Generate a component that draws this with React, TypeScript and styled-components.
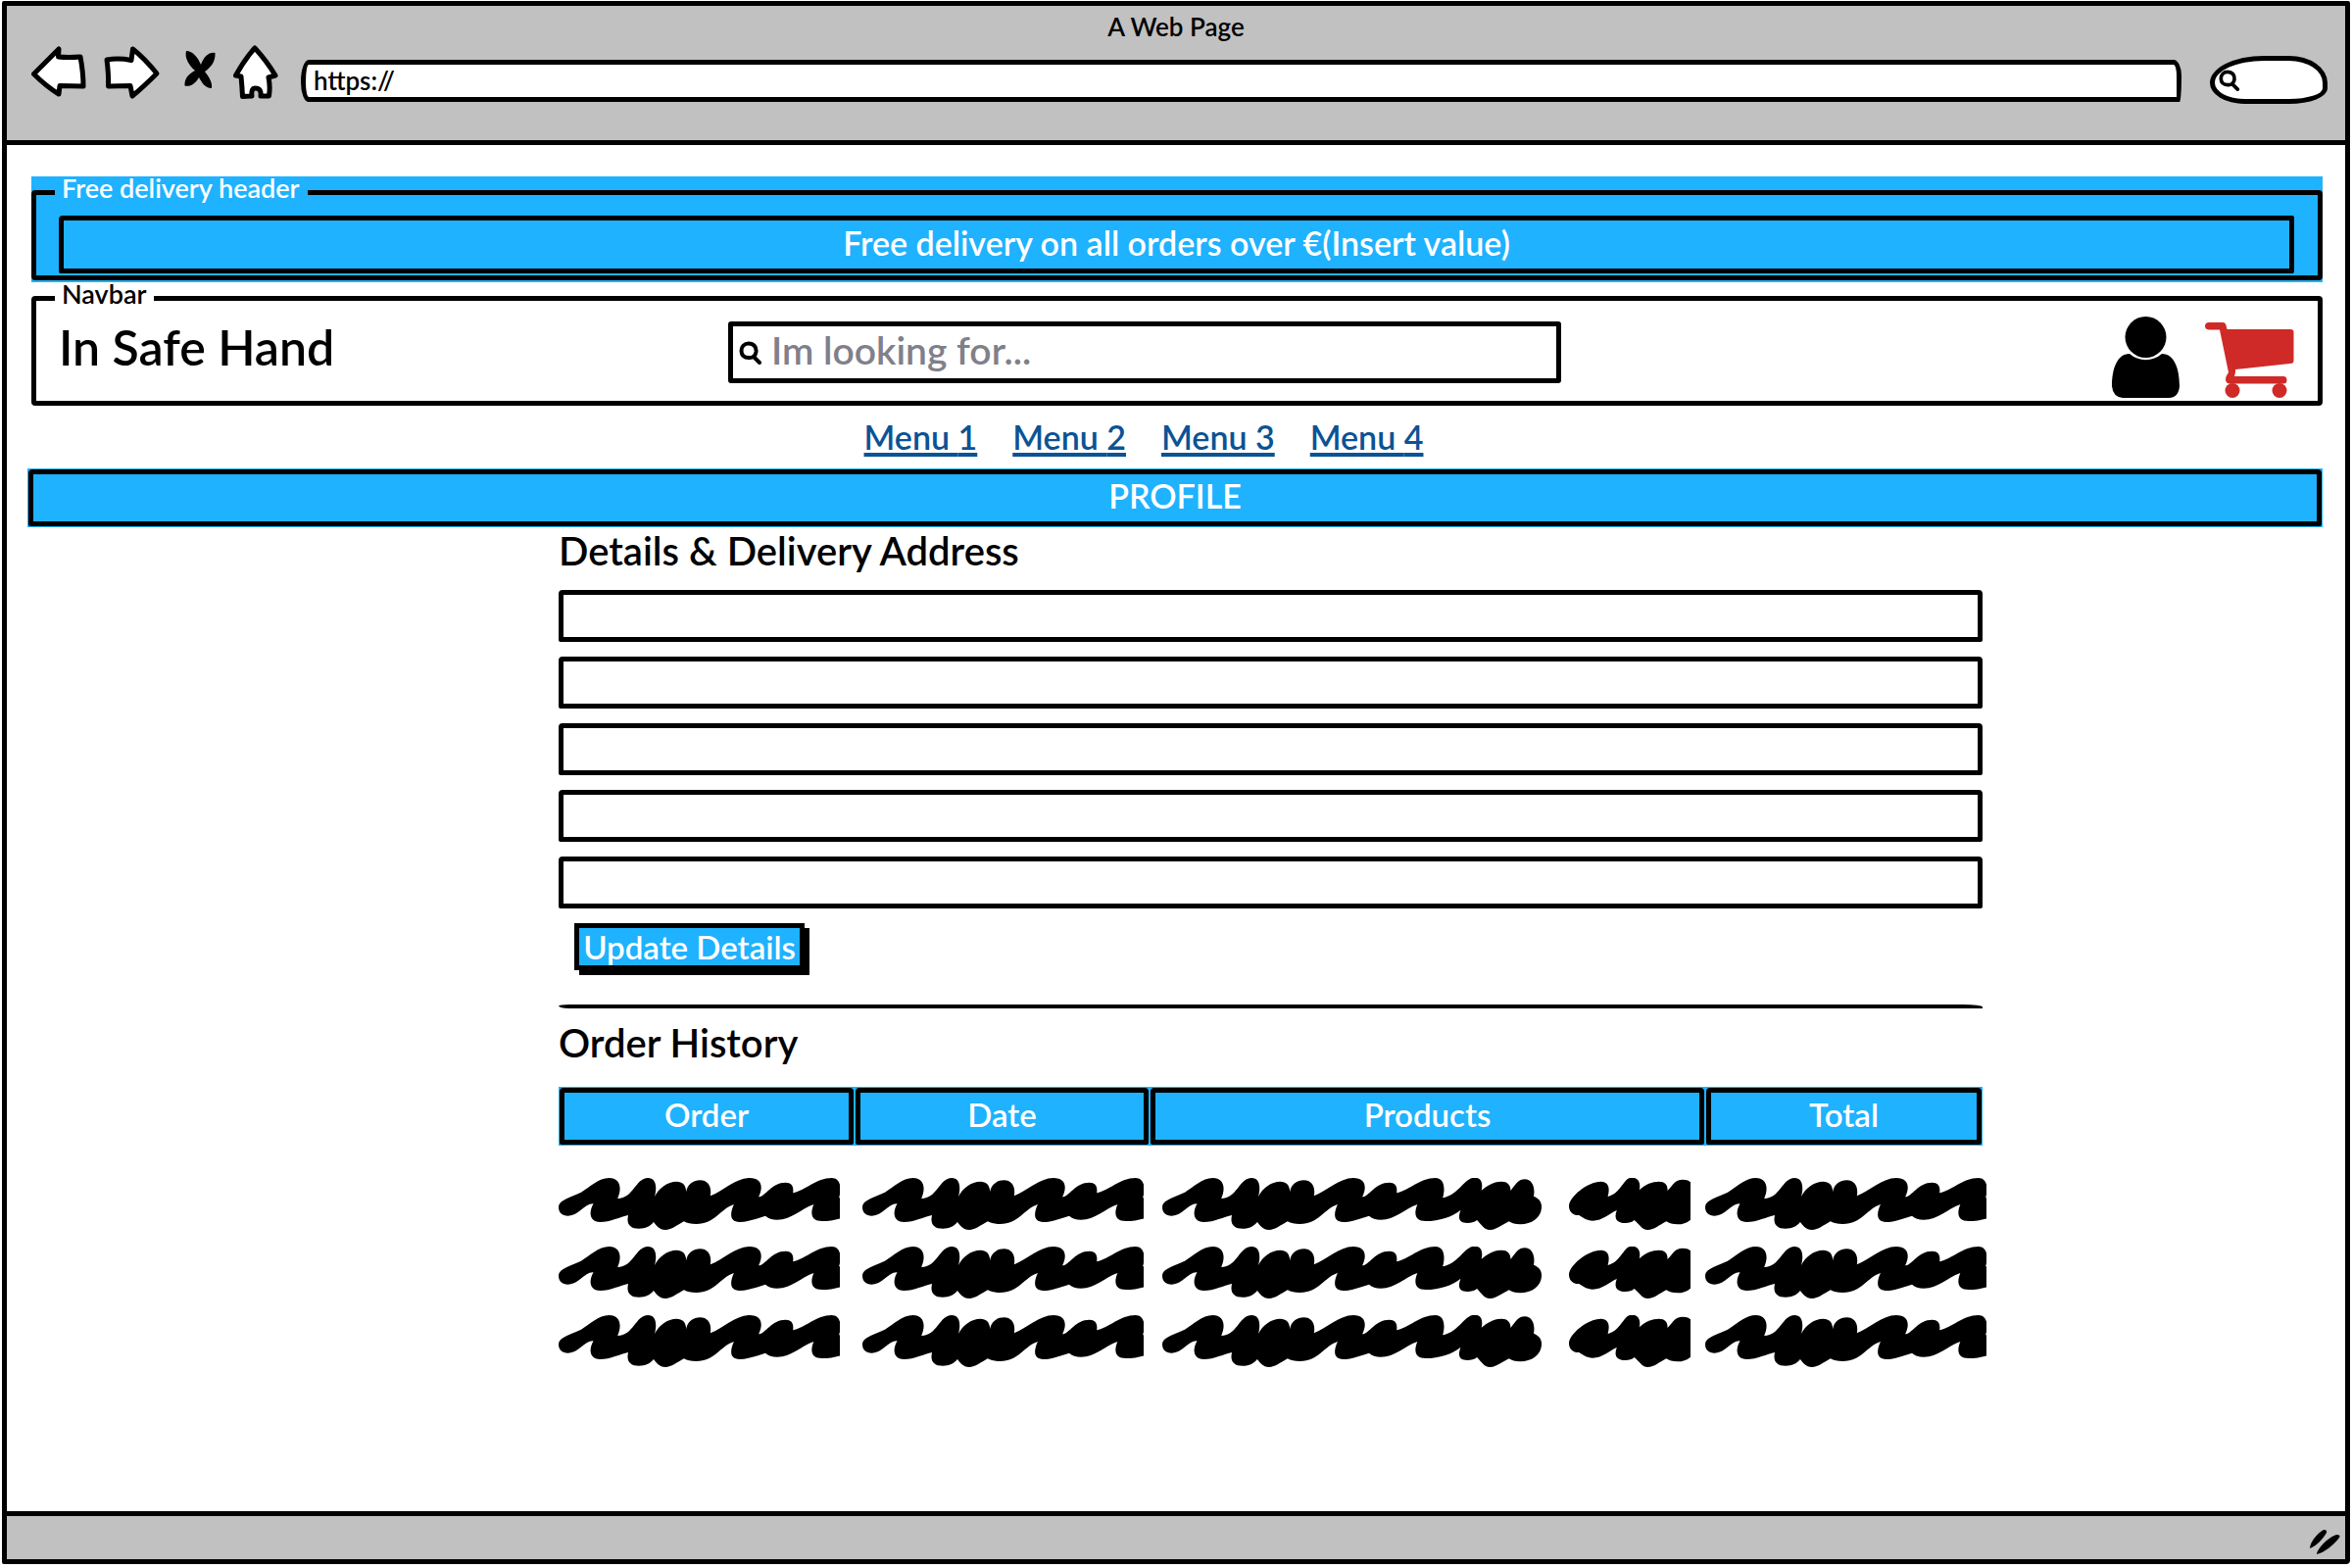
import React from "react";
import styled, { createGlobalStyle } from "styled-components";

const INK = "#000000";
const BLUE = "#1eb2ff";
const GREY = "#c1c1c1";

const GlobalStyle = createGlobalStyle`
  *, *::before, *::after { box-sizing: border-box; }
  body { margin: 0; background: #fff; }
  body, button, input {
    font-family: Lato, "Open Sans", sans-serif;
    font-weight: 600;
    color: ${INK};
  }
`;

const Page = styled.div`
  min-height: 100vh;
  display: flex;
  padding: 1px 2px 4px;
`;

const BrowserWindow = styled.div`
  flex: 1;
  min-width: 0;
  display: flex;
  flex-direction: column;
  border: 5px solid ${INK};
  border-radius: 2px 2px 4px 2px;
  background: #fff;
`;

const BrowserHeader = styled.header`
  background: ${GREY};
  border-bottom: 5px solid ${INK};
  padding-bottom: 37px;
`;

const WindowTitle = styled.div`
  padding-top: 2px;
  font-size: 26px;
  line-height: 38px;
  text-align: center;
`;

const Toolbar = styled.div`
  display: flex;
  align-items: flex-start;
  gap: 18px;
  height: 60px;
  padding: 0 18px 0 25px;
`;

const IconButton = styled.button`
  display: block;
  flex: none;
  padding: 0;
  border: 0;
  background: none;
  line-height: 0;
`;

const Address = styled.input`
  flex: 1;
  min-width: 0;
  height: 43px;
  margin: 15px 11px 0 5px;
  padding: 0 8px 2px;
  border: 5px solid ${INK};
  border-radius: 8px 8px 2px 8px / 22px 16px 26px 20px;
  background: #fff;
  font-size: 26px;
`;

const PillSearch = styled.div`
  display: flex;
  align-items: center;
  flex: none;
  width: 120px;
  height: 49px;
  margin-top: 11px;
  padding-left: 4px;
  border: 5px solid ${INK};
  border-radius: 56px 40px 40px 36px / 28px 28px 16px 22px;
  background: #fff;
`;

const BareInput = styled.input`
  flex: 1;
  min-width: 0;
  padding: 0 0 6px;
  border: 0;
  outline: 0;
  background: none;
  font-size: 39px;
  line-height: 46px;
  &::placeholder { color: #80808a; opacity: 1; }
`;

const Viewport = styled.div`
  flex: 1;
  padding: 32px 23px 32px 21px;
`;

const Group = styled.div<{ $fill?: string }>`
  margin-left: 4px;
  padding-bottom: ${(p) => (p.$fill ? 2 : 0)}px;
  background: ${(p) => p.$fill ?? "transparent"};
  color: ${(p) => (p.$fill ? "#fff" : INK)};
`;

const Fieldset = styled.fieldset<{ $pad: string }>`
  min-width: 0;
  margin: 0;
  padding: ${(p) => p.$pad};
  border: 5px solid ${INK};
  border-radius: 4px;
`;

const Legend = styled.legend`
  margin-left: -4px;
  padding: 0 8px 9px 7px;
  font-size: 27px;
  line-height: 23px;
`;

const Banner = styled.div`
  border: 5px solid ${INK};
  border-radius: 4px 2px 2px 2px;
  padding-bottom: 3px;
  font-size: 34px;
  line-height: 46px;
  text-align: center;
`;

const NavRow = styled.div`
  display: grid;
  grid-template-columns: 683fr 850fr 748fr;
  align-items: start;
`;

const Brand = styled.div`
  font-size: 50px;
  line-height: 62px;
`;

const SearchBox = styled.div`
  display: flex;
  align-items: center;
  gap: 9px;
  height: 63px;
  margin-top: 5px;
  padding: 0 6px;
  border: 5px solid ${INK};
  border-radius: 3px;
`;

const Actions = styled.div`
  display: flex;
  justify-content: flex-end;
  align-items: flex-end;
  gap: 26px;
`;

const Menu = styled.nav`
  display: flex;
  justify-content: center;
  gap: 36px;
  padding-right: 64px;
  line-height: 64px;
`;

const MenuLink = styled.a`
  color: #0b5394;
  font-size: 34px;
  text-decoration: underline;
  text-decoration-thickness: 4px;
  text-underline-offset: 3px;
  text-decoration-skip-ink: none;
`;

const ProfileBar = styled.h1`
  margin: 0;
  padding: 1px;
  background: ${BLUE};
  color: #fff;
  font-size: 34px;
  font-weight: 600;
  line-height: 44px;
  text-align: center;
`;

const Outlined = styled.span`
  display: block;
  padding-bottom: 4px;
  border: 5px solid ${INK};
  border-radius: 4px 4px 2px 2px;
`;

const Columns = styled.div`
  display: grid;
  grid-template-columns: 542fr 1453fr 347fr;
`;

const Main = styled.main`
  grid-column: 2;
  min-width: 0;
`;

const Heading = styled.h2`
  margin: 0;
  font-size: 40px;
  font-weight: 600;
  line-height: 48px;
`;

const Form = styled.form`
  display: flex;
  flex-direction: column;
  gap: 15px;
  margin-top: 16px;
`;

const Field = styled.input`
  width: 100%;
  height: 53px;
  padding: 0 12px;
  border: 5px solid ${INK};
  border-radius: 4px 4px 2px 2px;
  background: #fff;
  font-size: 33px;
`;

const UpdateButton = styled.button`
  align-self: flex-start;
  width: 235px;
  height: 48px;
  margin-left: 16px;
  padding: 0;
  border: 5px solid ${INK};
  background: ${BLUE};
  box-shadow: 5px 5px 0 ${INK};
  color: #fff;
  font-size: 33px;
  line-height: 38px;
  white-space: nowrap;
`;

const Divider = styled.hr`
  height: 4px;
  margin: 35px 0 11px;
  border: 0;
  border-radius: 16px 30px 0 16px / 2px 4px 0 4px;
  background: ${INK};
`;

const Table = styled.table`
  width: 100%;
  margin-top: 21px;
  table-layout: fixed;
  border-collapse: collapse;
`;

const Th = styled.th`
  padding: 1px;
  background: ${BLUE};
  color: #fff;
  font-size: 33px;
  font-weight: 600;
  line-height: 44px;
`;

const Td = styled.td<{ $indent: number }>`
  padding: 0 0 17px ${(p) => p.$indent}px;
  line-height: 0;
  white-space: nowrap;
  tr:first-child > & { padding-top: 33px; }
`;

const Strokes = styled.div`
  display: flex;
  gap: 28px;
`;

const StatusBar = styled.footer`
  display: flex;
  justify-content: flex-end;
  align-items: flex-end;
  height: 49px;
  padding: 0 4px 4px;
  border-top: 5px solid ${INK};
  background: ${GREY};
`;

const LONG_STROKE =
  "M47 158C47 141 58 134 87 113C102 98 118 69 137 69C155 69 161 96 152 132C180 132 184 69 206 69C219 69 223 92 218 126C225 100 241 80 257 80C267 80 274 90 274 112C276 88 287 76 299 76C313 76 320 96 317 124C340 109 362 69 387 69C408 69 412 95 403 127C415 126 426 83 451 83C462 83 466 96 464 115C485 108 506 69 533 69C549 69 551 101 546 130C574 122 585 68 603 68C615 68 618 86 615 107C628 88 639 80 651 80C661 80 667 90 667 108C677 86 681 73 692 73C705 73 711 97 708 125C717 131 722 142 722 157C722 190 705 211 684 211C675 211 669 208 664 202C650 214 641 228 630 228C619 228 615 211 607 198C602 205 597 207 590 207C574 207 573 190 578 167C563 188 540 201 516 201C497 201 494 180 501 150C477 165 461 197 436 197C427 197 420 193 415 185C401 192 384 204 369 204C352 204 351 180 359 150C336 162 325 210 292 210C282 210 276 208 270 202C258 213 248 228 237 228C226 228 221 214 216 204C209 218 202 224 190 224C174 224 167 209 171 183C157 188 139 204 121 204C102 204 100 175 109 148C93 146 83 185 64 185C53 185 47 174 47 158Z";

const SHORT_STROKE =
  "M770 155C770 128 802 80 827 80C841 80 843 101 839 126C864 115 866 68 882 68C894 68 898 86 895 106C906 88 918 80 930 80C941 80 946 91 945 108C955 91 958 74 972 74C980 74 984 78 986 82V197C979 207 972 211 963 211C954 211 948 207 943 202C930 213 922 228 910 228C899 228 896 211 886 198C882 205 877 207 870 207C853 207 850 190 855 168C842 177 830 200 812 200C802 200 794 190 788 183C775 184 770 169 770 155Z";

function LongScribble({ width }: { width: number }) {
  return (
    <svg width={width} height="53" viewBox={`47 69 ${width * 1.744} 159`} preserveAspectRatio="none" aria-hidden="true">
      <path d={LONG_STROKE} fill={INK} />
    </svg>
  );
}

function ShortScribble() {
  return (
    <svg width="124" height="53" viewBox="770 69 216 159" preserveAspectRatio="none" aria-hidden="true">
      <path d={SHORT_STROKE} fill={INK} />
    </svg>
  );
}

function Outline({ width, d }: { width: number; d: string }) {
  return (
    <svg width={width} height="56" viewBox={`0 0 ${width} 56`} aria-hidden="true">
      <path d={d} fill="#fff" stroke={INK} strokeWidth="5" strokeLinejoin="round" />
    </svg>
  );
}

function Magnifier({ size }: { size: number }) {
  return (
    <svg width={size} height={size} viewBox="0 0 24 24" fill="none" stroke={INK} strokeWidth="4" strokeLinecap="round" aria-hidden="true">
      <path d="M10 2.500C15 2.500 18 6 17.500 11C17 15 14 17.500 10 17C5 17 2.500 14 2.500 10C2.500 5.500 5.500 2.500 10 2.500Z" />
      <path d="M15 16L21 22" />
    </svg>
  );
}

const FIELDS = ["Full name", "Email", "Street address", "City", "Postcode"];
const HEADINGS = ["Order", "Date", "Products", "Total"];

export default function App() {
  return (
    <Page>
      <GlobalStyle />
      <BrowserWindow>
        <BrowserHeader>
          <WindowTitle>A Web Page</WindowTitle>
          <Toolbar>
            <IconButton aria-label="Back">
              <Outline width={56} d="M2.500 29.500L28 4L27.500 12Q38 13 50 12Q53 28 53 42L29 41.500L28 50Q15 42 2.500 29.500Z" />
            </IconButton>
            <IconButton aria-label="Forward">
              <Outline width={58} d="M3 15Q15 13 28 15.500L29.500 4Q42 14 54 29Q40 43 29 52L27 41.500L4.500 42Q5 30 3 15Z" />
            </IconButton>
            <IconButton aria-label="Stop">
              <svg width="38" height="56" viewBox="0 0 38 56" aria-hidden="true">
                <path d="M8 6C15 6 20 13 23 20C26 12 31 7 37.500 8C38 17 33 23 27 27C31 32 35 38 34 44C27 44 24 38 21 33C18 39 12 43 6.500 41.500C6 34 11 29 17 26C11 21 6 13 8 6Z" fill={INK} />
              </svg>
            </IconButton>
            <IconButton aria-label="Home">
              <Outline width={46} d="M22 3Q34 16 43 31L36 33Q38 42 36.500 52L28 52Q29 44 22.500 44Q18 44 19 52L9.500 52.500Q9 42 8 32L2.500 31Q12 14 22 3Z" />
            </IconButton>
            <Address aria-label="Address" defaultValue="https://" />
            <PillSearch>
              <Magnifier size={22} />
              <BareInput aria-label="Search the web" />
            </PillSearch>
          </Toolbar>
        </BrowserHeader>

        <Viewport>
          <Group $fill={BLUE}>
            <Fieldset $pad="8px 24px 2px 23px">
              <Legend>Free delivery header</Legend>
              <Banner>Free delivery on all orders over €(Insert value)</Banner>
            </Fieldset>
          </Group>
          <Group>
            <Fieldset $pad="3px 24px 3px 23px">
              <Legend>Navbar</Legend>
              <NavRow>
                <Brand>In Safe Hand</Brand>
                <SearchBox>
                  <Magnifier size={24} />
                  <BareInput aria-label="Search products" placeholder="Im looking for..." />
                </SearchBox>
                <Actions>
                  <IconButton aria-label="Account">
                    <svg width="69" height="83" viewBox="0 0 69 83" fill={INK} aria-hidden="true">
                      <circle cx="34.500" cy="21" r="21" />
                      <path d="M18 38A25 25 0 0 0 51 38C64 38 69 54 69 71Q68 83 58 83H11Q1 82 0 71C0 54 5 38 18 38Z" />
                    </svg>
                  </IconButton>
                  <IconButton aria-label="Cart">
                    <svg width="91" height="77" viewBox="0 0 91 77" fill="#cf2a27" aria-hidden="true">
                      <path d="M4 0H18Q21 0 21.500 3L22.500 7H87Q90.500 7 90.500 10V39Q90.500 42 87 42L31 48V51L30 55H80Q83.500 55 83.500 59Q83.500 62.500 80 62.500H25Q21 62 21 58Q21 55 24 51L15 7.500H4Q0 7 0 4Q0 0 4 0Z" />
                      <circle cx="28" cy="69.500" r="7.500" />
                      <circle cx="76" cy="69.500" r="7.500" />
                    </svg>
                  </IconButton>
                </Actions>
              </NavRow>
            </Fieldset>
          </Group>
          <Menu>
            {[1, 2, 3, 4].map((n) => (
              <MenuLink key={n} href={`#menu-${n}`}>Menu {n}</MenuLink>
            ))}
          </Menu>
          <ProfileBar>
            <Outlined>PROFILE</Outlined>
          </ProfileBar>
          <Columns>
            <Main>
              <Heading>Details &amp; Delivery Address</Heading>
              <Form onSubmit={(e) => e.preventDefault()}>
                {FIELDS.map((name) => (
                  <Field key={name} aria-label={name} />
                ))}
                <UpdateButton type="submit">Update Details</UpdateButton>
              </Form>
              <Divider />
              <Heading>Order History</Heading>
              <Table>
                <colgroup>
                  <col style={{ width: `${(302 / 1453) * 100}%` }} />
                  <col style={{ width: `${(301 / 1453) * 100}%` }} />
                  <col style={{ width: `${(567 / 1453) * 100}%` }} />
                  <col />
                </colgroup>
                <thead>
                  <tr>
                    {HEADINGS.map((h) => (
                      <Th key={h} scope="col"><Outlined>{h}</Outlined></Th>
                    ))}
                  </tr>
                </thead>
                <tbody>
                  {[1, 2, 3].map((row) => (
                    <tr key={row}>
                      <Td $indent={0}><LongScribble width={287} /></Td>
                      <Td $indent={8}><LongScribble width={287} /></Td>
                      <Td $indent={13}>
                        <Strokes>
                          <LongScribble width={387} />
                          <ShortScribble />
                        </Strokes>
                      </Td>
                      <Td $indent={0}><LongScribble width={287} /></Td>
                    </tr>
                  ))}
                </tbody>
              </Table>
            </Main>
          </Columns>
        </Viewport>

        <StatusBar>
          <svg width="32" height="26" viewBox="0 0 32 26" fill={INK} aria-hidden="true">
            <path d="M0 19C0 13 7 4 14 0Q18 0 17 3C13 10 7 16 0 19Z" />
            <path d="M7 25C7 20 18 8 27 5Q32 5 30 8C24 16 15 23 7 25Z" />
          </svg>
        </StatusBar>
      </BrowserWindow>
    </Page>
  );
}
